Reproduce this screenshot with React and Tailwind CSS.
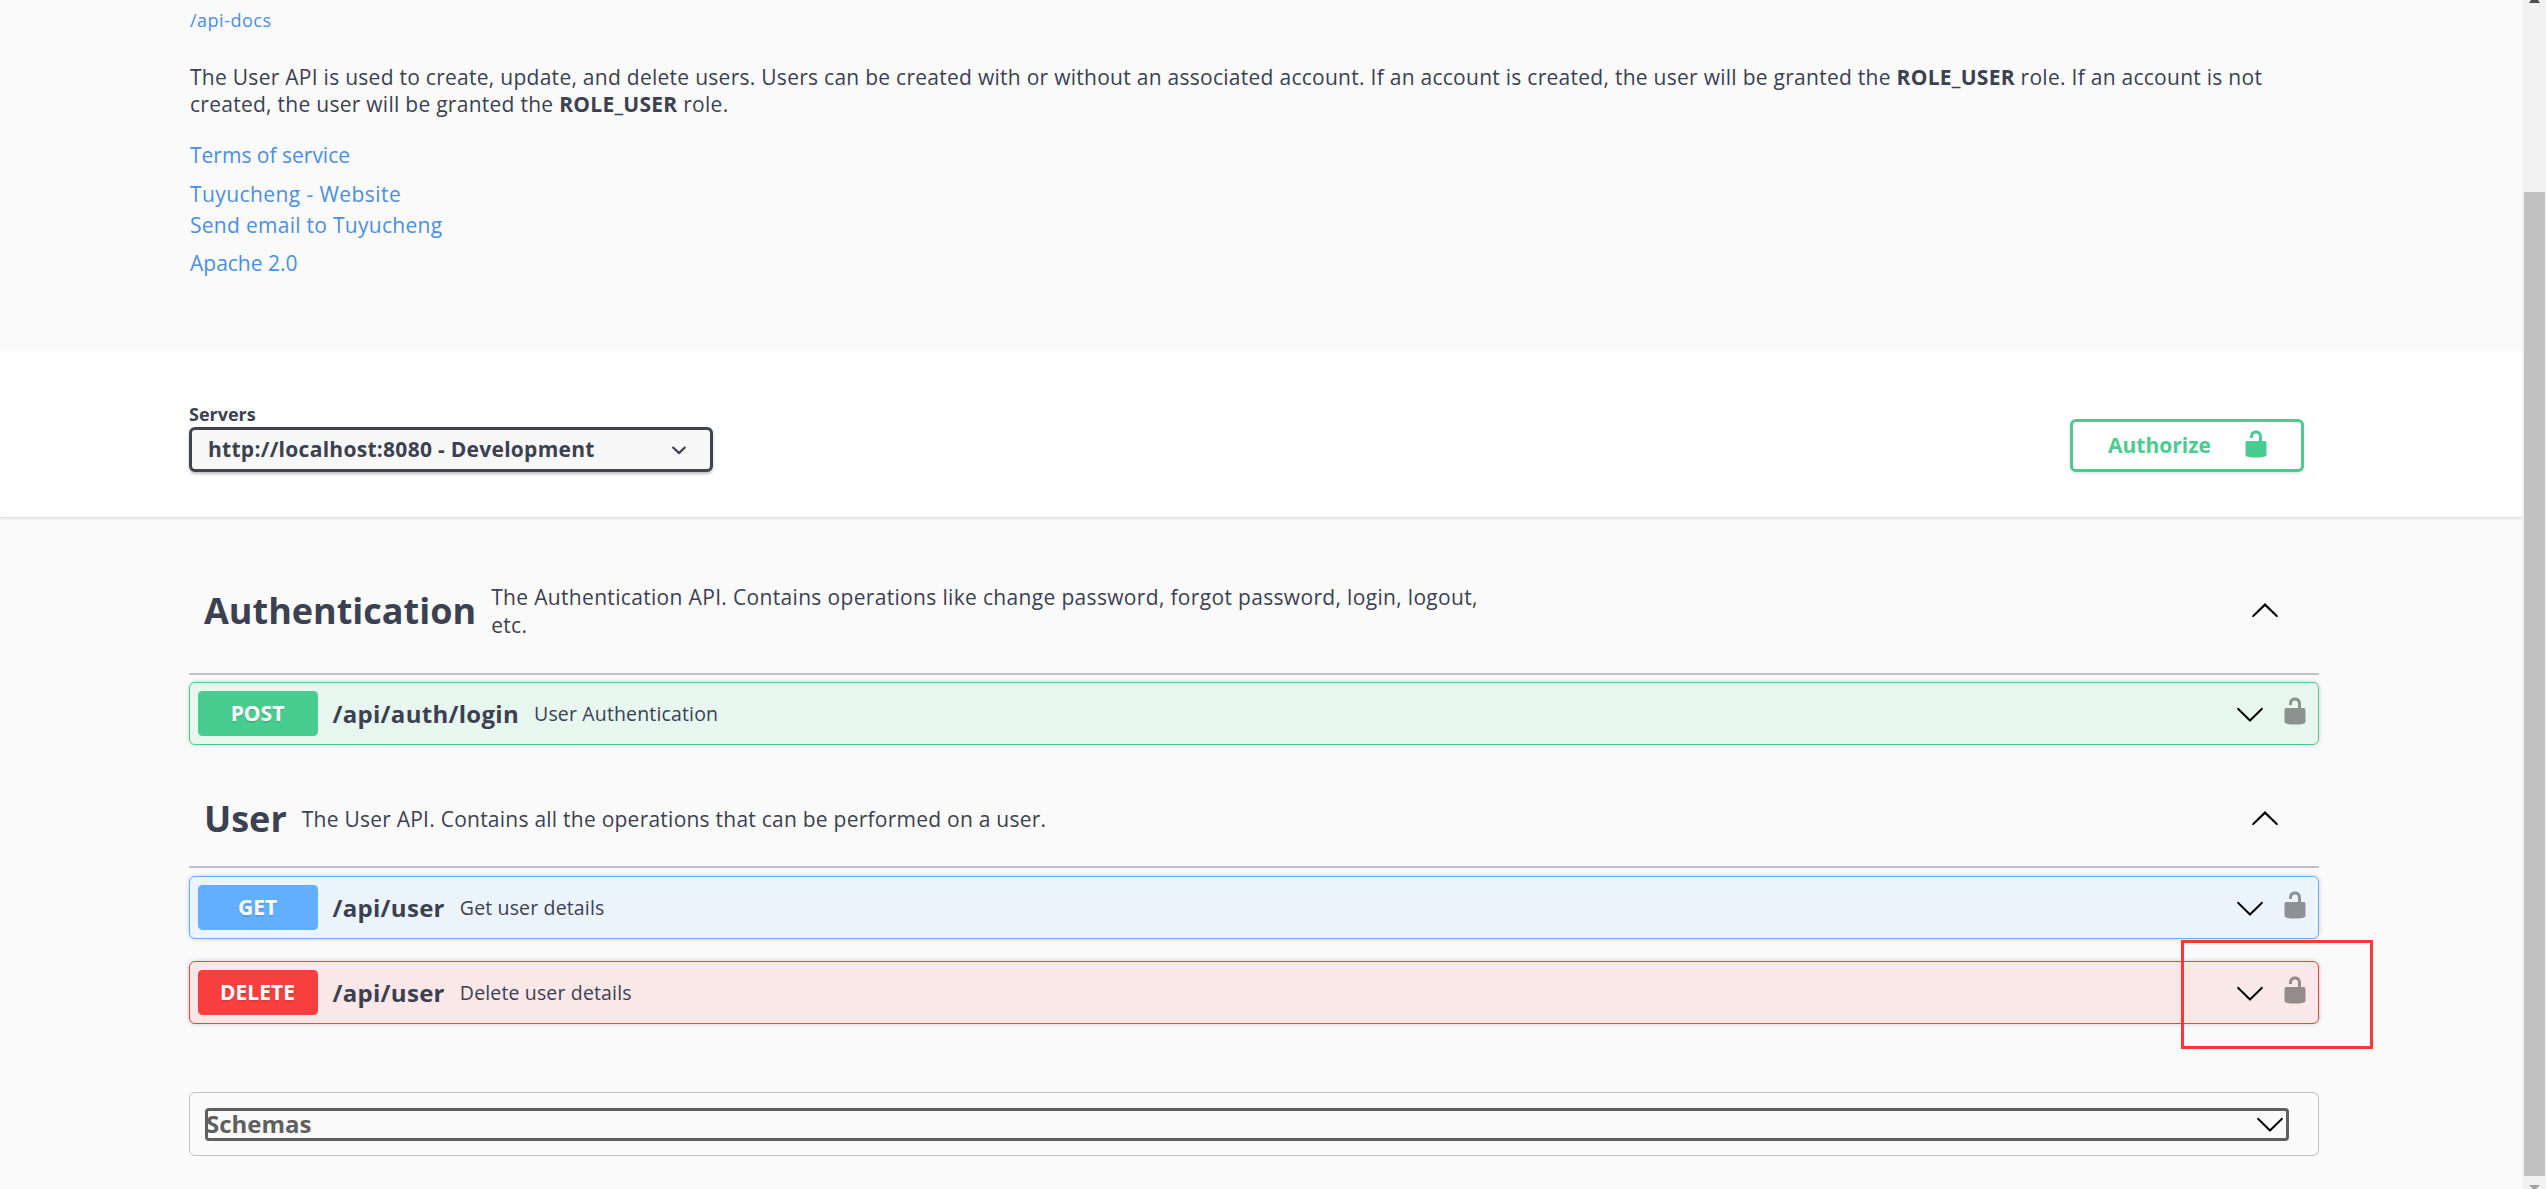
const LOCK = "M15.8 8H14V5.6C14 2.703 12.665 1 10 1 7.334 1 6 2.703 6 5.6V6h2v-.801C8 3.754 8.797 3 10 3c1.203 0 2 .754 2 2.199V8H4c-.553 0-1 .646-1 1.199V17c0 .549.428 1.139.951 1.307l1.197.387C5.672 18.861 6.55 19 7.1 19h5.8c.549 0 1.428-.139 1.951-.307l1.196-.387c.524-.167.953-.757.953-1.306V9.199C17 8.646 16.352 8 15.8 8z";
const ARROW = "M17.418 6.109c.272-.268.709-.268.979 0s.271.701 0 .969l-7.908 7.83c-.27.268-.707.268-.979 0l-7.908-7.83c-.27-.268-.27-.701 0-.969.271-.268.709-.268.979 0L10 13.25l7.418-7.141z";

function Icon({ d, className }) {
  return (
    <svg viewBox="0 0 20 20" className={className} fill="currentColor">
      <path d={d} />
    </svg>
  );
}

function OpRow({ method, path, summary, rowClass, badgeClass }) {
  return (
    <div className={`flex items-center h-[63px] rounded-[6px] border-[1.5px] pl-[7.5px] pr-[8px] shadow-[0_0_4px_rgba(0,0,0,0.19)] ${rowClass}`}>
      <span className={`w-[120px] h-[45px] rounded-[4.5px] flex items-center justify-center text-[21px] font-bold text-white [text-shadow:0_1.5px_0_rgba(0,0,0,0.1)] ${badgeClass}`}>
        {method}
      </span>
      <span className="ml-[15px] text-[24px] tracking-[0.3px] font-bold text-[#3b4151]">{path}</span>
      <span className="ml-[15px] text-[19.5px] tracking-[0.15px] text-[#3b4151]">{summary}</span>
      <Icon d={ARROW} className="ml-auto w-[30px] h-[30px] text-black" />
      <Icon d={LOCK} className="ml-[15px] mb-[5px] w-[30px] h-[30px] text-black/40" />
    </div>
  );
}

export default function App() {
  return (
    <div className="relative flex h-screen overflow-hidden bg-[#fafafa] text-[#3b4151] font-['Open_Sans','Noto_Sans',sans-serif]">
      <main className="w-[2522px] shrink-0">
        {/* Info block */}
        <section className="h-[351px] pl-[190px] pt-[7px]">
          <a className="block text-[18px] tracking-[0.5px] leading-[27px] text-[#4990e2]">/api-docs</a>
          <p className="mt-[30px] w-[2130px] text-[21px] tracking-[0.27px] leading-[27px]">
            The User API is used to create, update, and delete users. Users can be created with or without an associated account. If an account is created, the user will be granted the <b>ROLE_USER</b> role. If an account is not created, the user will be granted the <b>ROLE_USER</b> role.
          </p>
          <a className="block mt-[22px] text-[21px] leading-[30px] text-[#4990e2]">Terms of service</a>
          <a className="block mt-[9px] text-[21px] tracking-[0.42px] leading-[30px] text-[#4990e2]">Tuyucheng - Website</a>
          <a className="block mt-[1px] text-[21px] tracking-[0.28px] leading-[30px] text-[#4990e2]">Send email to Tuyucheng</a>
          <a className="block mt-[8px] text-[21px] leading-[30px] text-[#4990e2]">Apache 2.0</a>
        </section>

        {/* Servers bar */}
        <section className="h-[167px] bg-white border-b border-[#e2e2e2] shadow-[0_1px_2px_rgba(0,0,0,0.1)] pl-[189px]">
          <div className="w-[2130px] h-[121px] flex items-end justify-between pr-[15px]">
            <div>
              <div className="text-[18px] leading-[20px] font-bold">Servers</div>
              <div className="mt-[3px] w-[524px] h-[45px] flex items-center justify-between pl-[16px] pr-[18px] bg-[#f7f7f7] border-[3px] border-[#41444e] rounded-[6px] shadow-[0_1.5px_3px_rgba(0,0,0,0.25)] text-[21px] tracking-[0.28px] font-bold">
                <span>http://localhost:8080 - Development</span>
                <svg viewBox="0 0 20 20" className="w-[30px] h-[30px] -mr-[2px]" fill="currentColor">
                  <path d="M13.418 7.859c.271-.268.709-.268.978 0 .27.268.272.701 0 .969l-3.908 3.83c-.27.268-.707.268-.979 0l-3.908-3.83c-.27-.268-.27-.701 0-.969.271-.268.709-.268.978 0L10 11l3.418-3.141z" />
                </svg>
              </div>
            </div>
            <button className="w-[234px] h-[53px] flex items-center pl-[35px] border-[3px] border-[#49cc90] rounded-[6px] bg-white shadow-[0_1px_3px_rgba(0,0,0,0.15)] text-[21px] font-bold text-[#49cc90]">
              <span>Authorize</span>
              <Icon d={LOCK} className="ml-[30px] w-[30px] h-[30px] -mt-[3px]" />
            </button>
          </div>
        </section>

        <div className="ml-[189px] w-[2130px]">
          {/* Authentication */}
          <div className="h-[157px] pt-[30px] pl-[15px] pr-[39px] flex items-center border-b-2 border-[#3b4151]/30">
            <h3 className="text-[36px] font-bold">Authentication</h3>
            <p className="ml-[15px] w-[1000px] text-[21px] tracking-[0.33px] leading-[28px]">
              The Authentication API. Contains operations like change password, forgot password, login, logout, etc.
            </p>
            <Icon d={ARROW} className="ml-auto w-[30px] h-[30px] rotate-180 text-black" />
          </div>
          <div className="mt-[7px]">
            <OpRow method="POST" path="/api/auth/login" summary="User Authentication" rowClass="bg-[#e8f6f0] border-[#49cc90]" badgeClass="bg-[#49cc90]" />
          </div>

          {/* User */}
          <div className="h-[123px] pt-[27px] pl-[15px] pr-[39px] flex items-center border-b-2 border-[#3b4151]/30">
            <h3 className="text-[36px] font-bold">User</h3>
            <p className="ml-[15px] text-[21px] tracking-[0.24px] leading-[28px]">
              The User API. Contains all the operations that can be performed on a user.
            </p>
            <Icon d={ARROW} className="ml-auto w-[30px] h-[30px] rotate-180 text-black" />
          </div>
          <div className="mt-[8px]">
            <OpRow method="GET" path="/api/user" summary="Get user details" rowClass="bg-[#ebf3fb] border-[#61affe]" badgeClass="bg-[#61affe]" />
          </div>
          <div className="mt-[22px]">
            <OpRow method="DELETE" path="/api/user" summary="Delete user details" rowClass="bg-[#fae7e7] border-[#f93e3e]" badgeClass="bg-[#f93e3e]" />
          </div>

          {/* Schemas */}
          <div className="mt-[68px] h-[64px] flex items-center pl-[15px] pr-[29px] border-[1.5px] border-[#3b4151]/30 rounded-[6px]">
            <div className="flex-1 h-[33px] flex items-center justify-between pr-[1px] border-[3px] border-[#5f5f5f] rounded-[4px]">
              <span className="-ml-[2px] text-[24px] font-bold text-[#606060]">Schemas</span>
              <Icon d={ARROW} className="w-[30px] h-[30px] text-black" />
            </div>
          </div>
        </div>
      </main>

      {/* Browser scrollbar */}
      <aside className="w-[24px] shrink-0 bg-[#f1f1f1] pl-[2px] pr-[1px] flex flex-col items-stretch">
        <svg viewBox="0 0 11 3" className="w-[11px] h-[3px] ml-[5px]" fill="#505050">
          <polygon points="2,0 9,0 11,3 0,3" />
        </svg>
        <div className="mt-[189px] h-[984px] bg-[#c1c1c1]" />
        <svg viewBox="0 0 11 4" className="mt-[9px] w-[11px] h-[4px] ml-[5px]" fill="#a3a3a3">
          <polygon points="0,0 11,0 7,4 4,4" />
        </svg>
      </aside>

      {/* Red annotation box from the screenshot */}
      <div className="absolute left-[2181px] top-[940px] w-[192px] h-[109px] border-[3px] border-[#ff3636]" />
    </div>
  );
}
